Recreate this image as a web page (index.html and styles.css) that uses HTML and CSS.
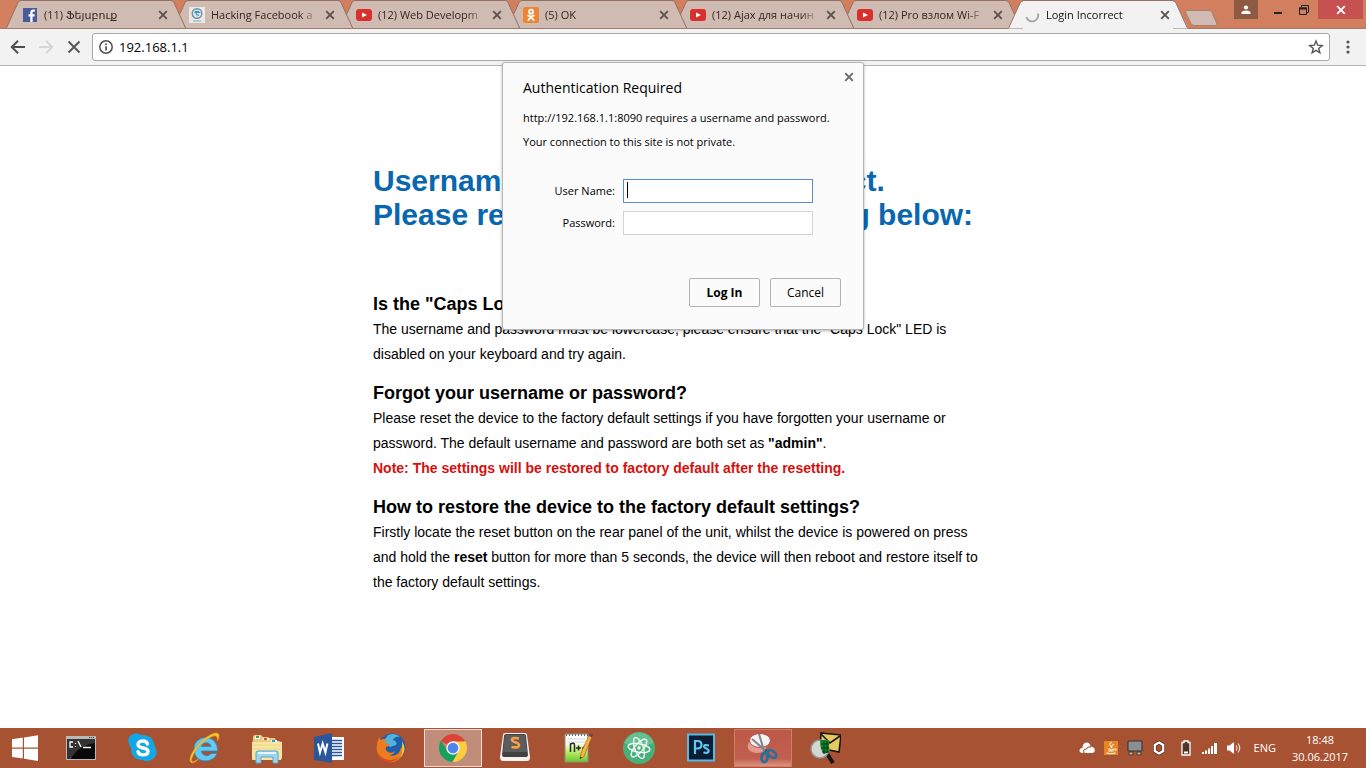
FILE: index.html
```
<!DOCTYPE html>
<html lang="en">
<head>
<meta charset="utf-8">
<title>Login Incorrect</title>
<link rel="stylesheet" href="styles.css">
</head>
<body>
<svg width="0" height="0" class="defs" aria-hidden="true">
  <symbol id="x" viewBox="0 0 10 10"><path d="M1.2 1.2 8.8 8.8M8.8 1.2 1.2 8.8" fill="none" stroke="currentColor" stroke-width="1.9"/></symbol>
  <symbol id="yt" viewBox="0 0 16 16"><rect y="2" width="16" height="12" rx="3" fill="#d9302c"/><path d="M6 5.400 11 8l-5 2.600z" fill="#fff"/></symbol>
  <symbol id="slope-l" viewBox="0 0 15 28"><path d="M0 28 12 2.500Q13 .5 15 .5V28z" fill="var(--tab)"/><path d="M.4 28 12 2.500Q13 .5 15 .5" fill="none" stroke="#93705f"/></symbol>
  <symbol id="slope-r" viewBox="0 0 15 28"><path d="M15 28 3 2.500Q2 .5 0 .5V28z" fill="var(--tab)"/><path d="M14.600 28 3 2.500Q2 .5 0 .5" fill="none" stroke="#93705f"/></symbol>
</svg>

<header class="titlebar">
  <nav class="tabs" aria-label="Tabs">
    <div class="tab">
      <svg class="slope"><use href="#slope-l"/></svg>
      <div class="tab-body">
        <svg class="favicon" viewBox="0 0 16 16"><path fill="#4a5b9c" d="M1 1h14v14H1z"/><path d="M8.300 15V9.500H6.500V7.200h1.800V5.500C8.300 3.600 9.400 2.600 11.200 2.600h1.600v2.200h-1.200c-.8 0-1 .4-1 1.100v1.300h2.200l-.3 2.300h-1.900V15z" fill="#fff"/></svg>
        <a class="tab-title" href="#">(11) Ֆեյսբուք</a>
        <button class="tab-close" aria-label="Close tab"><svg><use href="#x"/></svg></button>
      </div>
      <svg class="slope"><use href="#slope-r"/></svg>
    </div>
    <div class="tab">
      <svg class="slope"><use href="#slope-l"/></svg>
      <div class="tab-body">
        <svg class="favicon" viewBox="0 0 16 16"><path fill="#eee6e0" d="M0 0h16v16H0z"/><circle cx="8" cy="6.500" r="4.800" fill="#d6e8ee" stroke="#6f93a6" stroke-width="1.400"/><path d="M5.500 5.500q3-2.500 5 0H7q0 3 3 2.500" fill="none" stroke="#3a8fb5" stroke-width="1.200"/><path d="M4 14h8" stroke="#73b3bd"/></svg>
        <a class="tab-title" href="#">Hacking Facebook a</a>
        <button class="tab-close" aria-label="Close tab"><svg><use href="#x"/></svg></button>
      </div>
      <svg class="slope"><use href="#slope-r"/></svg>
    </div>
    <div class="tab">
      <svg class="slope"><use href="#slope-l"/></svg>
      <div class="tab-body">
        <svg class="favicon"><use href="#yt"/></svg>
        <a class="tab-title" href="#">(12) Web Developm</a>
        <button class="tab-close" aria-label="Close tab"><svg><use href="#x"/></svg></button>
      </div>
      <svg class="slope"><use href="#slope-r"/></svg>
    </div>
    <div class="tab">
      <svg class="slope"><use href="#slope-l"/></svg>
      <div class="tab-body">
        <svg class="favicon" viewBox="0 0 16 16"><rect width="16" height="16" rx="2" fill="#ee8532"/><circle cx="8" cy="4.700" r="2" fill="none" stroke="#fff" stroke-width="1.700"/><path d="M5 8.600q3 1.800 6 0M8 9.500l-2.700 3.700M8 9.500l2.700 3.700" fill="none" stroke="#fff" stroke-width="1.800" stroke-linecap="round"/></svg>
        <a class="tab-title" href="#">(5) OK</a>
        <button class="tab-close" aria-label="Close tab"><svg><use href="#x"/></svg></button>
      </div>
      <svg class="slope"><use href="#slope-r"/></svg>
    </div>
    <div class="tab">
      <svg class="slope"><use href="#slope-l"/></svg>
      <div class="tab-body">
        <svg class="favicon"><use href="#yt"/></svg>
        <a class="tab-title" href="#">(12) Ajax для начин</a>
        <button class="tab-close" aria-label="Close tab"><svg><use href="#x"/></svg></button>
      </div>
      <svg class="slope"><use href="#slope-r"/></svg>
    </div>
    <div class="tab">
      <svg class="slope"><use href="#slope-l"/></svg>
      <div class="tab-body">
        <svg class="favicon"><use href="#yt"/></svg>
        <a class="tab-title" href="#">(12) Pro взлом Wi-F</a>
        <button class="tab-close" aria-label="Close tab"><svg><use href="#x"/></svg></button>
      </div>
      <svg class="slope"><use href="#slope-r"/></svg>
    </div>
    <div class="tab tab-active">
      <svg class="slope"><use href="#slope-l"/></svg>
      <div class="tab-body">
        <svg class="favicon" viewBox="0 0 16 16"><path d="M14 6.500A6 6 0 0 1 2.300 10" fill="none" stroke="#a5a5a5" stroke-width="1.900"/></svg>
        <a class="tab-title" href="#">Login Incorrect</a>
        <button class="tab-close" aria-label="Close tab"><svg><use href="#x"/></svg></button>
      </div>
      <svg class="slope"><use href="#slope-r"/></svg>
    </div>
    <button class="new-tab" aria-label="New tab"><svg viewBox="0 0 34 16"><path d="M3 .5h22q2 0 3 2L33 14q.4 1.500-1 1.500H10q-2 0-3-2L1.500 2Q1 .5 3 .5z" fill="#d0bbb3" stroke="#a87f6d"/></svg></button>
  </nav>
  <div class="window-controls">
    <button class="profile" aria-label="Profile"><svg viewBox="0 0 10 10"><circle cx="5" cy="2.500" r="2.100" fill="#fff"/><path d="M.5 9V7.600Q1 5.500 5 5.500t4.500 2.100V9z" fill="#fff"/></svg></button>
    <button class="win" aria-label="Minimize"><svg viewBox="0 0 12 12"><path d="M2 8h8v2H2z" fill="#222"/></svg></button>
    <button class="win" aria-label="Restore"><svg viewBox="0 0 12 12"><path d="M3.500 3V1.500h7v7H9M1.500 4h7v6.500h-7z" fill="none" stroke="#222"/><path d="M1 3.500h8v2H1z" fill="#222"/></svg></button>
    <button class="win-close" aria-label="Close"><svg><use href="#x"/></svg></button>
  </div>
</header>

<div class="toolbar">
  <button class="nav-btn" aria-label="Back"><svg viewBox="0 0 16 16"><path d="M15 8H2M8 1.800 1.800 8 8 14.200" fill="none" stroke="#505050" stroke-width="2"/></svg></button>
  <button class="nav-btn" aria-label="Forward" disabled><svg viewBox="0 0 16 16"><path d="M1 8h13M8 1.800 14.200 8 8 14.200" fill="none" stroke="#d6d6d6" stroke-width="2"/></svg></button>
  <button class="nav-btn" aria-label="Stop"><svg viewBox="0 0 16 16"><path d="m2.500 2.500 11 11M13.500 2.500l-11 11" fill="none" stroke="#555" stroke-width="1.900"/></svg></button>
  <div class="omnibox">
    <svg class="info" viewBox="0 0 16 16"><circle cx="8" cy="8" r="6.200" fill="none" stroke="#505050" stroke-width="1.500"/><path d="M7.200 7.200h1.700v4.200H7.200zM7.200 4.400h1.700v1.700H7.200z" fill="#505050"/></svg>
    <input class="url" type="text" value="192.168.1.1" aria-label="Address">
    <button class="star" aria-label="Bookmark"><svg viewBox="0 0 16 16"><path d="m8 2 1.700 4.200 4.500.3-3.500 2.900 1.200 4.400L8 11.400l-3.900 2.400 1.200-4.400L1.800 6.500l4.500-.3z" fill="none" stroke="#555" stroke-width="1.400"/></svg></button>
  </div>
  <button class="menu" aria-label="Menu"><svg viewBox="0 0 4 16"><circle cx="2" cy="3" r="1.600" fill="#555"/><circle cx="2" cy="8" r="1.600" fill="#555"/><circle cx="2" cy="13" r="1.600" fill="#555"/></svg></button>
</div>

<main class="viewport">
  <article class="page">
    <h1>Username or Password is incorrect.<br>Please refer to the troubleshooting below:</h1>
    <h2>Is the "Caps Lock" enabled on your keyboard?</h2>
    <p>The username and password must be lowercase, please ensure that the "Caps Lock" LED is disabled on your keyboard and try again.</p>
    <h2>Forgot your username or password?</h2>
    <p>Please reset the device to the factory default settings if you have forgotten your username or password. The default username and password are both set as <b>"admin"</b>.<br><b class="note">Note: The settings will be restored to factory default after the resetting.</b></p>
    <h2>How to restore the device to the factory default settings?</h2>
    <p>Firstly locate the reset button on the rear panel of the unit, whilst the device is powered on press and hold the <b>reset</b> button for more than 5 seconds, the device will then reboot and restore itself to the factory default settings.</p>
  </article>

  <form class="dialog" role="dialog" aria-labelledby="auth-title">
    <button type="button" class="dialog-close" aria-label="Close"><svg><use href="#x"/></svg></button>
    <div id="auth-title" class="dialog-title">Authentication Required</div>
    <div class="dialog-text">http://192.168.1.1:8090 requires a username and password.</div>
    <div class="dialog-text">Your connection to this site is not private.</div>
    <div class="fields">
      <label for="user">User Name:</label>
      <div class="field"><input id="user" class="focused" type="text"><span class="caret"></span></div>
      <label for="pass">Password:</label>
      <div class="field"><input id="pass" type="password"></div>
    </div>
    <div class="actions">
      <button type="button" class="btn btn-main">Log In</button>
      <button type="button" class="btn">Cancel</button>
    </div>
  </form>
</main>

<footer class="taskbar">
  <button class="start" aria-label="Start"><svg viewBox="0 0 28 28"><path d="M1 5.300 11.800 3.600V13.500H1zM13 3.400 27 1.200v12.300H13zM1 14.700h10.800v9.900L1 23zM13 14.700h14V27l-14-2.200z" fill="#fff"/></svg></button>
  <button class="task" aria-label="Command Prompt"><svg viewBox="0 0 32 32"><path fill="#b9b9b9" d="M1 4h30v24H1z"/><path fill="#080808" d="M2 7h28v20H2z"/><path d="M2 7h28v4Q12 14 6 27H2z" fill="#333"/><path d="M24 5.500h1M26 5.500h1M28 5.500h1" stroke="#345"/><path d="M8 10H5v5h3M10.500 11v1M10.500 14v1M13 9l3 6M18 15.500h8" fill="none" stroke="#fff" stroke-width="1.300"/></svg></button>
  <button class="task" aria-label="Skype"><svg viewBox="0 0 32 32"><path d="M3 4Q9-1 14 3q12-1 14 12 4 7-2 12-5 4-10 1Q4 28 4 16-1 8 3 4z" fill="#12a7e5"/><path d="M20.500 12Q19.500 9 16 9c-3 0-5 1.300-5 3.500 0 5 10 2 10 6.700 0 2.400-2 3.700-5 3.700q-4 0-5-3.200" fill="none" stroke="#fff" stroke-width="3.400" stroke-linecap="round"/></svg></button>
  <button class="task" aria-label="Internet Explorer"><svg viewBox="0 0 32 32"><path d="M28.500 19H12.500c.3 5 7 6.300 9.500 2.500h6C24 32 5 32 5 17 5 2 29 1 28.500 19zM22 14.500c-.6-5-9-5-9.500 0z" fill="#62c9f2" stroke="#258cc9" stroke-width=".8"/><path d="M7 18C2 26 1 31 5 29.500q2-.7 4.500-2.500-5 5-7.500 3.500C-2 27 6 14 15 7 23 1 29-1 30 3q.5 2-1.500 6 .5-6-4-5C18 6 11 12 7 18z" fill="#f8c72d" stroke="#dba315" stroke-width=".6"/></svg></button>
  <button class="task" aria-label="File Explorer"><svg viewBox="0 0 32 32"><path d="M2 5q0-2 2-2h6l2 2h5l1 1h6l1 3h3q2 0 2 2v17H1z" fill="#e9cd7f"/><path d="M4 4h5v3H4zM12 6h6v2h-6zM20 8h6v2h-6z" fill="#fff"/><path d="M5 4h3v2H5z" fill="#39a359"/><path d="M13 6h3v2h-3z" fill="#d54d34"/><path d="M21 8h3v2h-3z" fill="#3596d4"/><path d="M1 10h30v15q0 3-3 3H4q-3 0-3-3z" fill="#f7e5a3"/><path d="M2 13h28M2 17h28" stroke="#eed58a"/><path d="M5 31V21q0-2 2-2h18q2 0 2 2v10h-5v-6H10v6z" fill="#9dd5ed" stroke="#5aa9cf"/><path d="M7 21h18" stroke="#e2f7ff" stroke-width="2"/></svg></button>
  <button class="task" aria-label="Word"><svg viewBox="0 0 32 32"><path fill="#fff" d="M17 5h14v23H17z"/><path d="M19 8.500h10M19 11.500h10M19 14.500h10M19 17.500h10M19 20.500h10M19 23.500h10" stroke="#2b579a" stroke-width="1.300"/><path d="M1 5 19 1v30L1 28z" fill="#2b579a"/><path d="m5 11.500 2 9 2.700-9 2.700 9 2-9" fill="none" stroke="#fff" stroke-width="2"/></svg></button>
  <button class="task" aria-label="Firefox"><svg viewBox="0 0 32 32"><circle cx="17" cy="15" r="13.500" fill="#1f5fa8"/><path d="M13 3q7-3 12 2-5-1-7 3 5 2 3 5l-6 2-7-5z" fill="#4fb2df"/><path d="M27 9q5 8 0 15-7 7-16 3 11 0 14-6 3-6 2-12z" fill="#fdc72f"/><path d="M4 5q0 2 2 3 3-2 6-1-3 2-2 4l5 1q0 2-4 3-1 3 2 5 4 2 7-1-1 4-6 4 10 3 12-8 3 8-3 13-6 4-13 1Q-3 24 4 5z" fill="#ed7b20"/><path d="M1.500 16q1 8 8.500 11 8 3 14-2-6 7-14 4.500Q2 27 1.500 16z" fill="#d64a25"/></svg></button>
  <button class="task task-active" aria-label="Chrome"><svg viewBox="0 0 32 32"><path d="M16 16 3.900 9A14 14 0 0 1 28.100 9z" fill="#dc4437"/><path d="M16 9.600H28.400A14 14 0 0 1 15.300 30l6.200-10.800z" fill="#ffcd40"/><path d="M10.500 19.200 4.100 8.600A14 14 0 0 0 15.300 30l6.200-10.800z" fill="#14a05d"/><circle cx="16" cy="16" r="6.700" fill="#f3f3f3"/><circle cx="16" cy="16" r="5.300" fill="#4d87ee"/></svg></button>
  <button class="task" aria-label="Sublime Text"><svg viewBox="0 0 32 32"><path d="M4 3q0-2 2-2h20q2 0 2 2l3 22q0 4-3 4H4q-3 0-3-4z" fill="#f5f2f0"/><path d="M5 4q0-2 2-2h18q2 0 2 2l2 19q0 2-2 2H5q-2 0-2-2z" fill="#414141"/><path d="M6 3h20l2 17H4z" fill="#5c5c5c"/><path d="M20 6.500q-7-1.500-7 1.500c0 2.800 7 1.800 7 5.200q0 3-7.500 1.800" fill="none" stroke="#f4a044" stroke-width="2.600"/></svg></button>
  <button class="task" aria-label="Notepad++"><svg viewBox="0 0 32 32"><defs><linearGradient id="np" x2="0" y2="1"><stop offset=".3" stop-color="#fff"/><stop offset=".6" stop-color="#c7ee73"/><stop offset="1" stop-color="#68c92a"/></linearGradient></defs><path d="M4 2h23v28H4z" fill="url(#np)" stroke="#879278"/><path d="M5 3h22" stroke="#667" stroke-width="2" stroke-dasharray="1 2"/><path d="M6 7h18M6 10h18" stroke="#cad4df"/><path d="M9.500 20v-8q4-2 4 1v7M15 16h5M17.500 13.500v5M21 16h5M23.500 13.500v5" fill="none" stroke="#202b1b" stroke-width="1.500"/><path d="m19 27 1-6L28 3l3 1.500-8 20z" fill="#f2b541" stroke="#a56a1c" stroke-width=".7"/><path d="m28 4 1-3 3 1.500-1 3z" fill="#803e48"/><path d="m19 27 .5-2.500 1.500 1z" fill="#222"/></svg></button>
  <button class="task" aria-label="Atom"><svg viewBox="0 0 32 32"><circle cx="16" cy="16" r="16" fill="#48b079"/><path d="M1 11A16 16 0 0 1 31 11Q16 18 1 11z" fill="#65c18f"/><g fill="none" stroke="#fff" stroke-width="1.300"><ellipse cx="16" cy="16" rx="4.200" ry="11" transform="rotate(-20 16 16)"/><ellipse cx="16" cy="16" rx="4.200" ry="11" transform="rotate(40 16 16)"/><ellipse cx="16" cy="16" rx="4.200" ry="11" transform="rotate(100 16 16)"/></g><circle cx="16" cy="16" r="1.700" fill="#fff"/></svg></button>
  <button class="task" aria-label="Photoshop"><svg viewBox="0 0 32 32"><path d="M3 2.500h26v26H3z" fill="#0b1d33" stroke="#54b9e5" stroke-width="2"/><path d="M10 22V9h2.500q4 0 4 3.700t-4 3.800H10M24 13.500q-5-1.300-5 1c0 2.200 4.700 2 4.700 4.200 0 2.500-3 2.500-5.200 1.500" fill="none" stroke="#5fc7f5" stroke-width="2.200"/></svg></button>
  <button class="task task-alert" aria-label="Snipping Tool"><svg viewBox="0 0 32 32"><ellipse cx="10" cy="14" rx="9.500" ry="7" fill="#e59a91"/><ellipse cx="13" cy="8.500" rx="10.500" ry="7" fill="#f7f1f1" stroke="#b94a4a"/><path d="m5 7 15 13M12 2l6 20" stroke="#7d868b" stroke-width="2"/><path d="M17 20 19 17l3 2z" fill="#28587a"/><g fill="none" stroke="#286f9e" stroke-width="2.800"><ellipse cx="17.500" cy="25.500" rx="3" ry="4.500" transform="rotate(8 17.500 25.500)"/><ellipse cx="25" cy="22" rx="3" ry="5" transform="rotate(-50 25 22)"/></g></svg></button>
  <button class="task" aria-label="Mail Search"><svg viewBox="0 0 32 32"><path d="m12 1 20 2-2 17-19-4z" fill="#e8ca62" stroke="#151515" stroke-width="1.600"/><path d="m12 2 9 9L31 4" fill="none" stroke="#151515" stroke-width="1.600"/><path d="m17 20 7 11" stroke="#171717" stroke-width="4"/><circle cx="11" cy="17" r="9" fill="#d4d6d2" stroke="#909690" stroke-width="1.500"/><path d="M11 8h9v12l-5 2q-4-4-4-14z" fill="#16882c"/><path d="M12 12h8M12 16h8M13 20h7M15 9v13M18 9v12" stroke="#073c12"/></svg></button>
  <div class="tray">
    <svg viewBox="0 0 16 16"><path d="M4 13Q0 13 .5 10 1 8 3.500 8 3.500 3 7.500 2.500q3.500 0 4 4Q15.800 7 15.800 10q0 3-3 3z" fill="#fff"/><path d="M5 13Q3.500 9 7.500 9 8.500 6 12 7" fill="none" stroke="#81442e"/></svg>
    <svg viewBox="0 0 16 16"><path d="M1 1h14v14H1z" fill="#e98622"/><path d="M9 2q-4 2-1 4 1 1 0 2M11 4q-4 2-2 4M5 9q3 1.500 7 0M5.500 11h5M3.500 13q4 1.500 9 0M12 9q3 0 0 2" fill="none" stroke="#fff"/></svg>
    <svg viewBox="0 0 16 16"><path d="M1 1h14v10H1z" fill="#888e91" stroke="#34302e"/><path d="M2 12h4v3H2zM10 12h4v3h-4z" fill="#b9bbbb" stroke="#49342d"/></svg>
    <svg viewBox="0 0 16 16"><path d="m8 2.500 4.200 2.500v6L8 13.500 3.800 11V5z" fill="none" stroke="#3f2c24" stroke-width="3.400"/><path d="m8 2.500 4.200 2.500v6L8 13.500 3.800 11V5z" fill="none" stroke="#fff" stroke-width="2.200"/></svg>
    <svg class="tray-gap" viewBox="0 0 16 16"><path d="M6 1h4v1.500h2v12.500H4V2.500h2z" fill="#4e3429" stroke="#fff" stroke-width="1.300"/><path d="M6 11.500h4v2H6z" fill="#fff"/></svg>
    <svg viewBox="0 0 16 16"><path d="M0 12h2v2H0zM3 10.500h2V14H3zM6 8.500h2V14H6zM9 6h2v8H9zM12 3h3v11h-3z" fill="#fff"/></svg>
    <svg viewBox="0 0 16 16"><path d="M1 5.500h2.500L8 2v12l-4.500-3.500H1z" fill="#fff"/><path d="M10 5.500q2 2.500 0 5M12 3.500q3.500 4.500 0 9" fill="none" stroke="#f3e3dc" stroke-width="1.100"/></svg>
    <button class="lang">ENG</button>
    <time class="clock" datetime="2017-06-30T18:48">18:48<br>30.06.2017</time>
  </div>
</footer>
</body>
</html>
```
FILE: styles.css
```
* { box-sizing: border-box; }

body {
  margin: 0;
  height: 100vh;
  display: flex;
  flex-direction: column;
  overflow: hidden;
  background: #fff;
  color: #000;
  font: 11px/16px "Open Sans", "Noto Sans", "DejaVu Sans", sans-serif;
}

button {
  border: 0;
  padding: 0;
  background: none;
  font: inherit;
  color: inherit;
  display: flex;
  align-items: center;
  justify-content: center;
}

svg { display: block; }
.defs { position: absolute; }

/* Tab strip */
.titlebar {
  display: flex;
  justify-content: space-between;
  align-items: flex-start;
  flex: none;
  height: 29px;
  padding-left: 6px;
  background: #d27f5f;
  border-bottom: 1px solid #a07a6a;
}
.tabs { display: flex; flex: 0 1 1220px; min-width: 0; }
.tab {
  --tab: #d0bbb3;
  display: flex;
  flex: 0 1 180px;
  min-width: 0;
  height: 28px;
  margin-right: -13px;
  position: relative;
}
.tab:nth-child(1) { z-index: 6; }
.tab:nth-child(2) { z-index: 5; }
.tab:nth-child(3) { z-index: 4; }
.tab:nth-child(4) { z-index: 3; }
.tab:nth-child(5) { z-index: 2; }
.tab:nth-child(6) { z-index: 1; }
.tab-active { --tab: #f2f2f2; z-index: 7; height: 29px; }
.slope { width: 15px; height: 100%; flex: none; }
.tab-body {
  display: flex;
  align-items: center;
  flex: 1;
  min-width: 0;
  padding: 0 3px 0 1px;
  background: var(--tab);
  border-top: 1px solid #93705f;
}
.favicon { width: 16px; height: 16px; flex: none; }
.tab-title {
  flex: 1;
  min-width: 0;
  margin: 0 6px;
  overflow: hidden;
  white-space: nowrap;
  color: #33251f;
  text-decoration: none;
  mask-image: linear-gradient(to left, transparent, #000 20px);
}
.tab-active .tab-title { color: #111; }
.tab-close { flex: none; color: #5a5250; }
.tab-close svg { width: 10px; height: 10px; }
.new-tab { margin: 7px 0 0 9px; }
.new-tab svg { width: 34px; height: 16px; }

.window-controls { display: flex; flex: none; align-items: flex-start; padding-right: 3px; }
.window-controls svg { width: 12px; height: 12px; }
.window-controls .profile { width: 24px; height: 19px; background: #8f5a44; margin-right: 7px; }
.window-controls .profile svg { width: 10px; height: 10px; }
.win { width: 26px; height: 19px; }
.win-close { width: 45px; height: 19px; margin-left: 1px; background: #c75050; color: #fff; }
.window-controls .win-close svg { width: 10px; height: 10px; }

/* Navigation toolbar */
.toolbar {
  display: flex;
  align-items: center;
  flex: none;
  height: 37px;
  padding: 0 8px 0 4px;
  background: #f2f2f2;
  border-bottom: 1px solid #b5b5b5;
}
.nav-btn { width: 28px; height: 28px; }
.nav-btn svg { width: 16px; height: 16px; }
.omnibox {
  display: flex;
  align-items: center;
  flex: 1;
  height: 28px;
  margin: 0 8px 0 4px;
  padding: 0 5px;
  background: #fff;
  border: 1px solid #a9a9a9;
  border-radius: 3px;
}
.info { width: 16px; height: 16px; }
.url {
  flex: 1;
  min-width: 0;
  margin-left: 5px;
  padding: 0;
  border: 0;
  outline: 0;
  background: none;
  font: inherit;
  font-size: 13px;
}
.star svg { width: 16px; height: 16px; }
.menu { width: 20px; height: 28px; }
.menu svg { width: 4px; height: 16px; }

/* Router page */
.viewport { flex: 1; min-height: 0; position: relative; }
.page {
  max-width: 620px;
  margin: 0 auto;
  padding-top: 98px;
  font: 14px/25px "Liberation Sans", Arial, sans-serif;
}
.page h1 {
  margin: 0 0 60px;
  color: #0967b0;
  font-size: 30px;
  line-height: 34px;
}
.page h2 { margin: 0; font-size: 18px; line-height: 25px; }
.page p { margin: 0 0 14px; }
.note { color: #d8100c; }

/* Sign-in dialog, laid over the page */
.dialog {
  position: absolute;
  top: -4px;
  left: 50%;
  z-index: 10;
  width: 362px;
  margin-left: -181px;
  padding: 16px 22px 22px 20px;
  background: #fbfbfb;
  border: 1px solid #b4b4b4;
  border-radius: 3px;
  box-shadow: 0 1px 3px rgba(0, 0, 0, .3);
}
.dialog-close { position: absolute; top: 9px; right: 9px; color: #6b6b6b; }
.dialog-close svg { width: 10px; height: 10px; }
.dialog-title { margin-bottom: 9px; font-size: 14px; line-height: 18px; }
.dialog-text { line-height: 24px; white-space: nowrap; }
.fields {
  display: grid;
  grid-template-columns: 92px 190px;
  gap: 8px;
  align-items: center;
  margin-top: 25px;
  text-align: right;
}
.field { position: relative; }
.field input {
  display: block;
  width: 100%;
  height: 24px;
  padding: 0 4px;
  border: 1px solid #d4d4d4;
  outline: 0;
  background: #fff;
  font: inherit;
}
.field .focused { border-color: #5b8bd0; }
.caret { position: absolute; left: 4px; top: 3px; width: 1px; height: 16px; background: #000; }
.actions { display: flex; justify-content: flex-end; gap: 10px; margin-top: 43px; }
.btn {
  width: 71px;
  height: 29px;
  border: 1px solid #b2b2b2;
  border-radius: 2px;
  background: #fbfbfb;
  font-size: 12px;
}
.btn-main { font-weight: 700; }

/* Taskbar */
.taskbar { display: flex; flex: none; height: 40px; background: #a85234; color: #fff; }
.start { width: 50px; }
.start svg { width: 28px; height: 28px; }
.task { width: 58px; height: 38px; margin: 1px 2px; border: 1px solid transparent; }
.task svg { width: 32px; height: 32px; }
.task-active { background: #c18d7b; border-color: #ecd9d1; }
.task-alert { background: linear-gradient(#bb5848, #c2604f 80%, #dc9484); border-color: #d5796b; }
.tray { display: flex; align-items: center; gap: 8px; margin-left: auto; padding-right: 13px; }
.tray svg { width: 16px; height: 16px; }
.tray-gap { margin-left: 3px; }
.lang { margin: 0 3px 0 4px; }
.clock { width: 66px; text-align: center; line-height: 17px; }
```
